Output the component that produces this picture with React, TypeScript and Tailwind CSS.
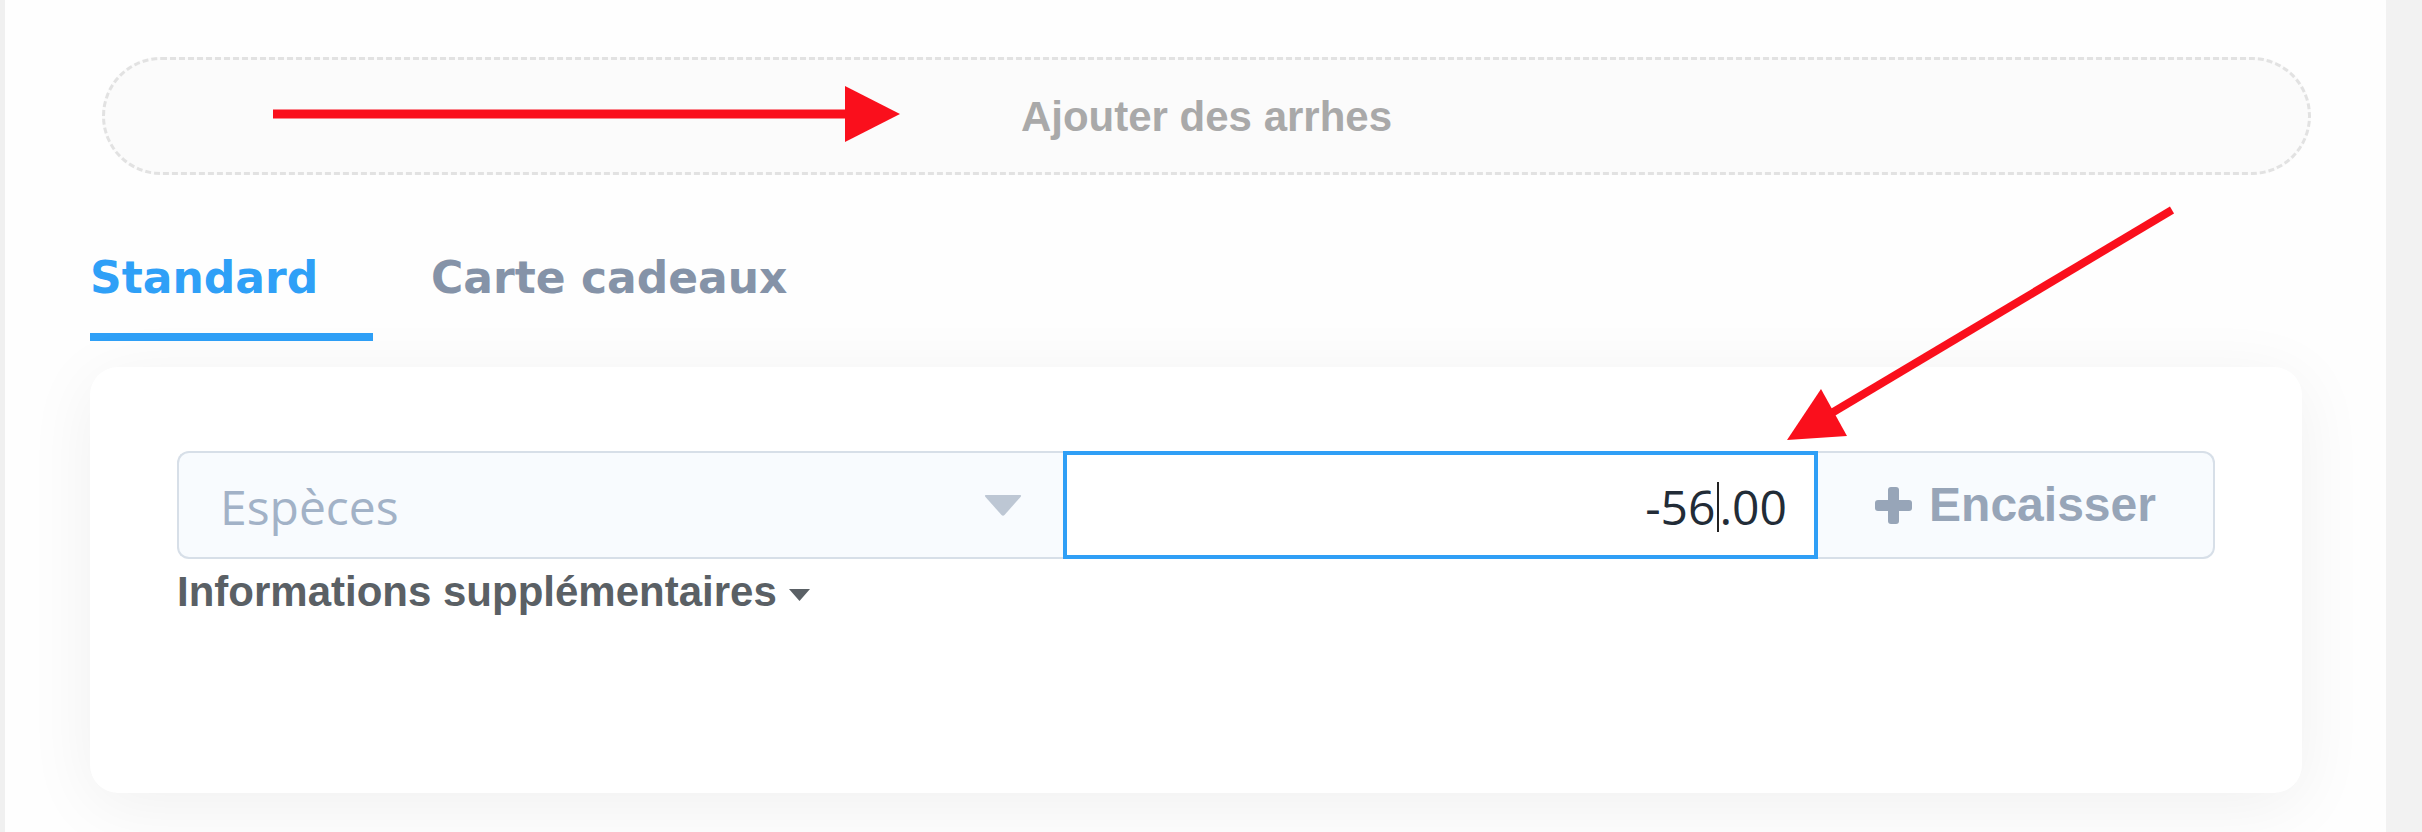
import React from "react";

const sans = { fontFamily: '"Liberation Sans", Arial, sans-serif' };
const verd = { fontFamily: '"DejaVu Sans", Verdana, sans-serif' };
const open = { fontFamily: '"Open Sans", "Noto Sans", sans-serif' };

function Annotations() {
  return (
    <svg
      className="pointer-events-none absolute inset-0"
      width="2422"
      height="832"
      viewBox="0 0 2422 832"
    >
      <line x1="273" y1="114" x2="850" y2="114" stroke="#fa0f1c" strokeWidth="9" />
      <polygon points="845,86 900,114 845,142" fill="#fa0f1c" />
      <line x1="2172" y1="210" x2="1830" y2="414" stroke="#fa0f1c" strokeWidth="8" />
      <polygon points="1787,440 1821,389 1847,436" fill="#fa0f1c" />
    </svg>
  );
}

export default function App() {
  return (
    <div className="relative flex h-[832px] w-full bg-[#f2f2f2]">
      <div className="w-[5px] bg-[#f0f0f0]" />
      <div className="flex flex-1 flex-col bg-[#fefefe] pt-[57px]">
        <div className="ml-[97px] mr-[75px] flex h-[118px] items-center justify-center rounded-full border-[3px] border-dashed border-[#e2e2e2] bg-[#fbfbfb]">
          <span style={sans} className="text-[42px] font-bold text-[#a9a9a9]">
            Ajouter des arrhes
          </span>
        </div>

        <div className="mt-[79px] flex pl-[85px]" style={verd}>
          <div className="flex w-[283px] flex-col">
            <span className="text-[44px] font-bold leading-[48px] text-[#2fa0f7]">
              Standard
            </span>
            <div className="mt-[31px] h-[8px] bg-[#2fa0f7]" />
          </div>
          <span className="ml-[58px] text-[44px] font-bold leading-[48px] text-[#8593a8]">
            Carte cadeaux
          </span>
        </div>

        <div className="ml-[85px] mr-[84px] mt-[26px] h-[426px] rounded-[28px] bg-white px-[87px] pt-[84px] shadow-[0_12px_70px_rgba(0,0,0,0.06)]">
          <div className="flex h-[108px]">
            <div className="flex w-[886px] items-center justify-between rounded-l-[12px] border-2 border-r-0 border-[#d7dfe8] bg-[#f8fbfe] pl-[41px] pr-[41px]">
              <span style={open} className="pt-[3px] text-[48px] leading-none text-[#a2b2c7]">
                Espèces
              </span>
              <svg width="38" height="21" viewBox="0 0 38 21">
                <path d="M2 0 H36 Q38 0 36.5 2 L20.5 20 Q19 21.5 17.5 20 L1.5 2 Q0 0 2 0 Z" fill="#bdc7d4" />
              </svg>
            </div>
            <div className="flex w-[755px] items-center justify-end border-4 border-[#2f9ff6] bg-white pr-[27px]">
              <span style={open} className="flex items-center pt-[3px] text-[48px] leading-none text-[#222c37]">
                -56
                <span className="mx-[1px] h-[50px] w-[2px] bg-[#222]" />
                .00
              </span>
            </div>
            <div className="flex flex-1 items-center justify-center gap-[17px] rounded-r-[12px] border-2 border-l-0 border-[#d7dfe8] bg-[#f8fbfe]">
              <svg width="37" height="37" viewBox="0 0 37 37">
                <rect x="13" y="0" width="11" height="37" rx="3" fill="#97a5b8" />
                <rect x="0" y="13" width="37" height="11" rx="3" fill="#97a5b8" />
              </svg>
              <span style={sans} className="text-[48px] font-bold leading-none text-[#97a5b8]">
                Encaisser
              </span>
            </div>
          </div>
          <div className="mt-[10px] flex items-center gap-[12px]">
            <span style={sans} className="text-[42px] font-bold leading-[46px] text-[#5a6065]">
              Informations supplémentaires
            </span>
            <svg width="21" height="12" viewBox="0 0 21 12" className="mt-[6px]">
              <path d="M0 0 H21 L10.5 12 Z" fill="#5a6065" />
            </svg>
          </div>
        </div>
      </div>
      <div className="w-[36px] bg-[#f2f2f2]" />
      <Annotations />
    </div>
  );
}
